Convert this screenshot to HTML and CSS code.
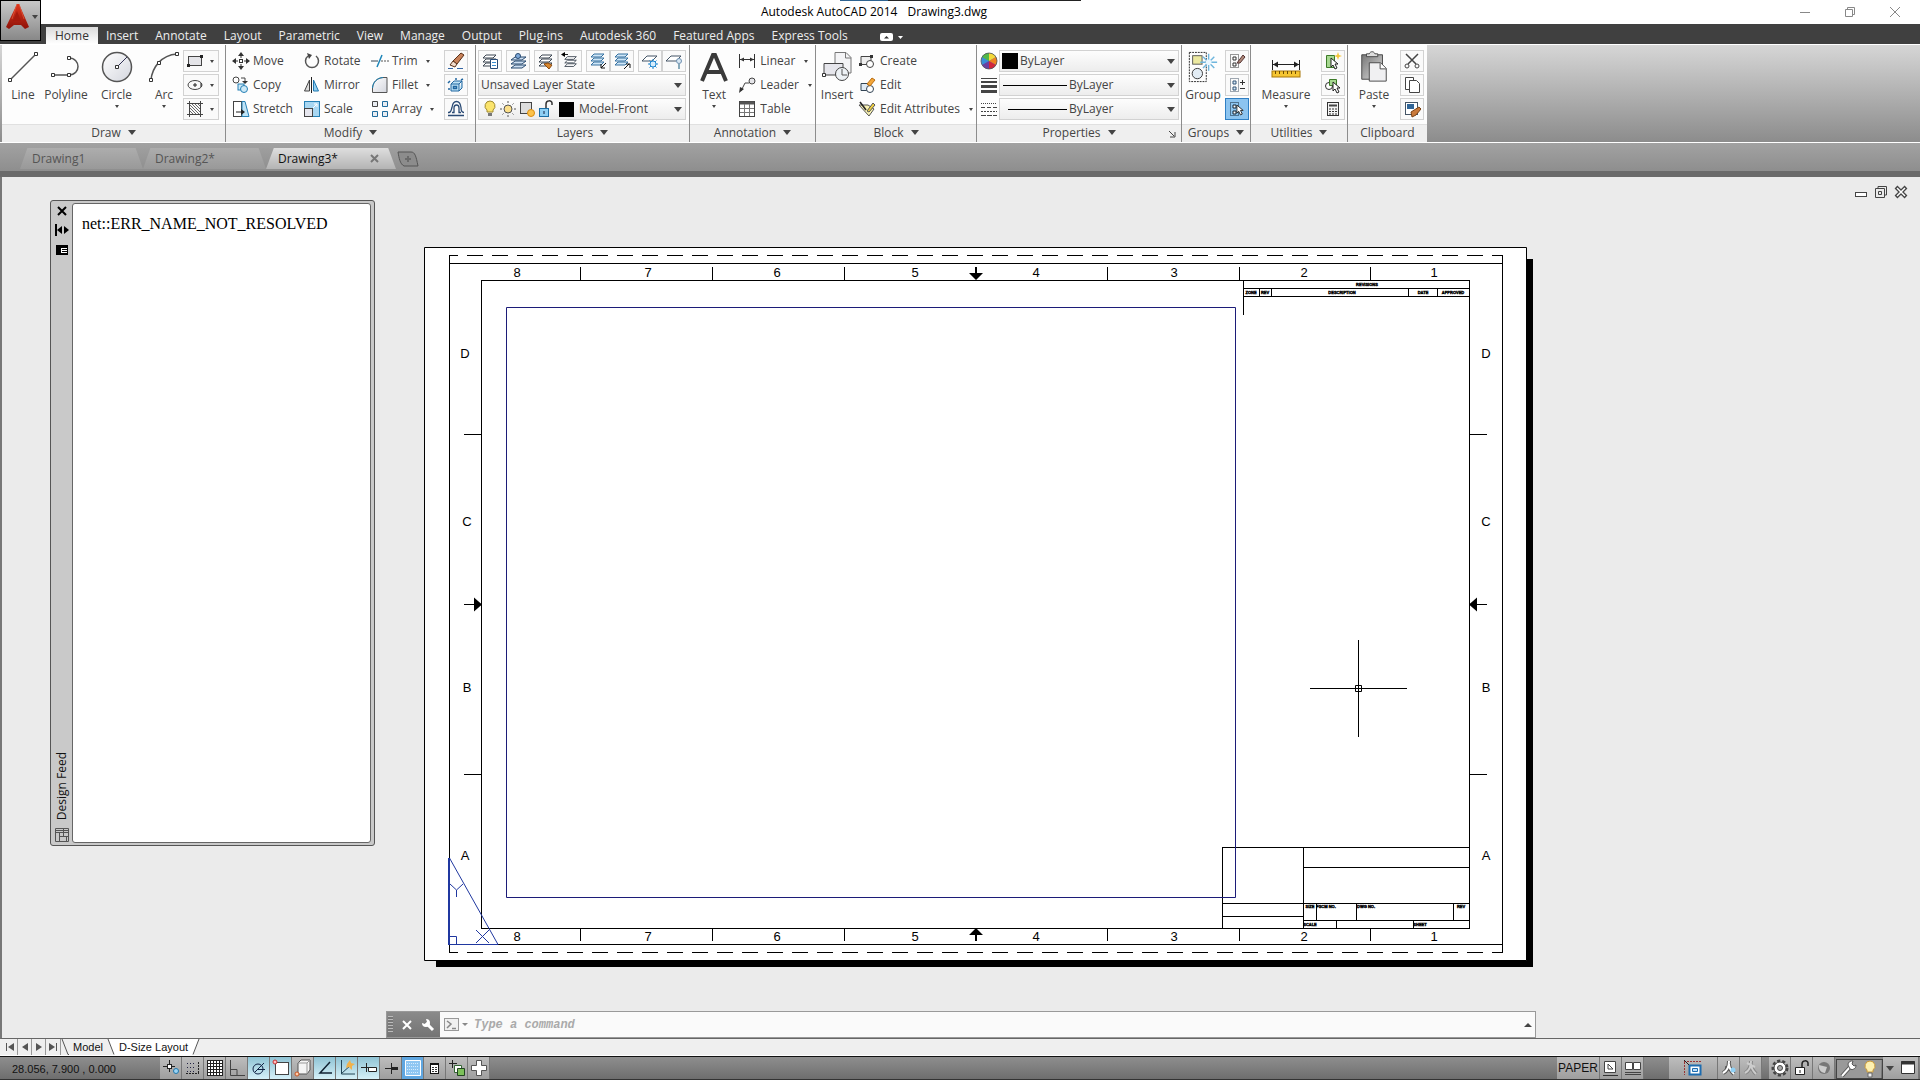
FILE: index.html
```html
<!DOCTYPE html>
<html lang="en">
<head>
  <meta charset="UTF-8" />
  <meta name="viewport" content="width=device-width, initial-scale=1.0" />
  <title>Autodesk AutoCAD 2014 - Drawing3.dwg</title>
  <link rel="stylesheet" href="styles.css">
</head>
<body>
  <!-- shared glyphs -->
  <svg width="0" height="0" class="defs" aria-hidden="true">
    <defs>
      <linearGradient id="g-red" x1="0" y1="0" x2="0" y2="1"><stop offset="0" stop-color="#e0361c"/><stop offset="1" stop-color="#8e1208"/></linearGradient>
      <linearGradient id="g-grey" x1="0" y1="0" x2="1" y2="1"><stop offset="0" stop-color="#fff"/><stop offset="1" stop-color="#d4d6de"/></linearGradient>
      <linearGradient id="g-paste" x1="0" y1="0" x2="1" y2="1"><stop offset="0" stop-color="#777"/><stop offset="1" stop-color="#ddd"/></linearGradient>
      <pattern id="p-hatch" width="3" height="3" patternUnits="userSpaceOnUse"><path d="M0 0L3 3" stroke="#444" stroke-width=".8"/></pattern>
      <symbol id="layers" viewBox="0 0 18 18">
        <path d="M5 3h10l-3 3H2zM5 7h10l-3 3H2zM5 11h10l-3 3H2z" fill="#fff" stroke="#3a4450"/>
      </symbol>
      <symbol id="cursor" viewBox="0 0 10 13"><path d="M1 1v9l2-2 2 4 2-1-2-4h3z" fill="#fff" stroke="#222"/></symbol>
    </defs>
  </svg>

  <header class="title-bar">
    <span class="top-line"></span>
    <h1><span>Autodesk AutoCAD 2014</span><span>Drawing3.dwg</span></h1>
    <div class="window-controls">
      <button aria-label="Minimize"><svg width="12" height="12"><path d="M1 6.500h10" stroke="#888"/></svg></button>
      <button aria-label="Restore"><svg width="12" height="12" fill="none" stroke="#888"><path d="M1.500 3.500h7v7h-7zM3.500 3.500v-2h7v7h-2"/></svg></button>
      <button aria-label="Close"><svg width="12" height="12"><path d="M1 1l10 10M11 1L1 11" stroke="#888"/></svg></button>
    </div>
  </header>

  <button class="app-button" aria-label="Application menu">
    <svg width="25" height="27" viewBox="0 0 25 27"><path d="M12 1L1 24l3 2 5-4h7l4 4 4-2L14 1z" fill="url(#g-red)"/><path d="M12 8l-4 10h8z" fill="#a61a0c"/><path d="M12 1L7 16M14 1l5 15" stroke="#d9553a" stroke-width=".8"/></svg>
    <i class="arrow"></i>
  </button>

  <nav class="menu-tabs">
    <button class="active">Home</button>
    <button>Insert</button>
    <button>Annotate</button>
    <button>Layout</button>
    <button>Parametric</button>
    <button>View</button>
    <button>Manage</button>
    <button>Output</button>
    <button>Plug-ins</button>
    <button>Autodesk 360</button>
    <button>Featured Apps</button>
    <button>Express Tools</button>
    <button class="min-ribbon" aria-label="Minimize ribbon"><svg width="26" height="10"><rect x="1" y="1" width="13" height="8" rx="2" fill="#fff"/><path d="M5 6.500h5L7.500 4z" fill="#333"/><path d="M19 4h5l-2.500 3z" fill="#fff"/></svg></button>
  </nav>

  <div class="ribbon">
    <section class="panel">
      <div class="panel-body draw">
        <button class="large"><svg width="32" height="32" viewBox="0 0 32 32"><path d="M3 29L29 3" stroke="#555" stroke-width="1.500"/><path d="M1.500 27.500h3v3h-3zM27.500 1.500h3v3h-3z" fill="#fff" stroke="#333"/></svg>Line</button>
        <button class="large"><svg width="32" height="32" viewBox="0 0 32 32" fill="none" stroke="#555" stroke-width="1.500"><path d="M3 24h16c12 0 12-17 0-17"/><path d="M1.500 22.500h3v3h-3zM17.500 22.500h3v3h-3zM17.500 5.500h3v3h-3z" fill="#fff" stroke="#333" stroke-width="1"/></svg>Polyline</button>
        <button class="large"><svg width="32" height="32" viewBox="0 0 32 32"><circle cx="16" cy="16" r="14.500" fill="url(#g-grey)" stroke="#555" stroke-width="1.500"/><path d="M16 16L26 6" stroke="#335"/><path d="M14.500 14.500h3v3h-3z" fill="#fff" stroke="#333"/></svg>Circle<i class="arrow"></i></button>
        <button class="large"><svg width="32" height="32" viewBox="0 0 32 32"><path d="M3 29C4 17 13 4 29 3" fill="none" stroke="#555" stroke-width="1.500"/><path d="M1.500 27.500h3v3h-3zM9.500 10.500h3v3h-3zM27.500 1.500h3v3h-3z" fill="#fff" stroke="#333"/></svg>Arc<i class="arrow"></i></button>
        <div class="stack">
          <button class="split" aria-label="Rectangle"><svg width="18" height="14"><rect x="2.500" y="2.500" width="13" height="9" fill="#e4e4e8" stroke="#444"/><path d="M1 10h3v3H1zM14 1h3v3h-3z" fill="#222"/></svg><i class="arrow"></i></button>
          <button class="split" aria-label="Ellipse"><svg width="18" height="14"><ellipse cx="9" cy="7" rx="7" ry="4.500" fill="none" stroke="#444"/><path d="M7 7h4M9 5v4M15 5v4" stroke="#222"/></svg><i class="arrow"></i></button>
          <button class="split" aria-label="Hatch"><svg width="18" height="16"><rect x="3" y="3" width="11" height="10" fill="url(#p-hatch)"/><path d="M3.500 0v16M14.500 0v16M1 2.500h16M1 13.500h16" stroke="#444"/></svg><i class="arrow"></i></button>
        </div>
      </div>
      <footer class="panel-title">Draw<i class="arrow big"></i></footer>
    </section>

    <section class="panel">
      <div class="panel-body modify">
        <button class="tool"><svg width="18" height="18" stroke="#333"><path d="M9 2v14M2 9h14" stroke-dasharray="4 6"/><path d="M9 0l3 4H6zM9 18l3-4H6zM0 9l4-3v6zM18 9l-4-3v6z" fill="#333" stroke="none"/><rect x="7.500" y="7.500" width="3" height="3" fill="#fff"/></svg>Move</button>
        <button class="tool"><svg width="18" height="18"><path d="M13 4A6.500 6.500 0 1 1 5 4" fill="none" stroke="#555" stroke-width="1.500"/><path d="M4 1l5 2-3 4z" fill="#444"/></svg>Rotate</button>
        <button class="tool"><svg width="18" height="18"><path d="M0 9h7" stroke="#345"/><path d="M6 15l5-12" stroke="#1b84b8" stroke-width="1.500"/><path d="M10 9h8" stroke="#555" stroke-dasharray="2 1"/></svg>Trim<i class="arrow"></i></button>
        <button class="mini" aria-label="Erase"><svg width="18" height="18"><path d="M14 1l3 2-7 9-4-3z" fill="#c8825a" stroke="#5a3018"/><path d="M6 9l4 3-2 3-5-2z" fill="#f2dccb" stroke="#5a3018"/><path d="M1 16.500h5M10 16.500h6" stroke="#3465a4"/></svg></button>

        <button class="tool"><svg width="18" height="18" fill="#fff"><circle cx="4" cy="4" r="3" stroke="#444"/><path d="M9 2h4v3" fill="none" stroke="#444"/><path d="M10 5h6l-3 3z" fill="#333"/><rect x="6" y="8" width="6" height="6" fill="#cde9f7" stroke="#2680b5"/><circle cx="12" cy="13" r="3.500" fill="#cde9f7" stroke="#2680b5"/></svg>Copy</button>
        <button class="tool"><svg width="18" height="18"><path d="M8.500 1v16" stroke="#222"/><path d="M6.500 4v11h-5z" fill="#ddd" stroke="#444"/><path d="M10.500 4v11h5z" fill="#8fcdf0" stroke="#1f78b0"/></svg>Mirror</button>
        <button class="tool"><svg width="18" height="18"><path d="M1.500 16.500V12C2 6 6 2 12 1.500h4v15z" fill="url(#g-grey)" stroke="#555"/><path d="M1.500 12C2 6 6 2 12 1.500" fill="none" stroke="#1b84b8"/></svg>Fillet<i class="arrow"></i></button>
        <button class="mini" aria-label="Explode"><svg width="18" height="18" fill="#bfe3f6" stroke="#2166a0"><path d="M4 8h8v7H4zM4 8l3-3h8l-3 3M12 15l3-3V5"/><path d="M6.500 10.500h3v2h-3zM1 7l2-2M16 3l-2 1M1 13h2M9 2v2" stroke-width="1.500"/></svg></button>

        <button class="tool"><svg width="18" height="18"><rect x="1.500" y="1.500" width="8" height="15" fill="#fff" stroke="#444"/><path d="M10 1.500h3l4 15h-7z" fill="#bfe3f6" stroke="#2680b5"/><path d="M4 12h7" stroke="#222"/><path d="M9 9l4 3-4 3z" fill="#222"/></svg>Stretch</button>
        <button class="tool"><svg width="18" height="18"><rect x="1.500" y="1.500" width="15" height="15" fill="#a9d7f2" stroke="#2680b5"/><rect x="1.500" y="8.500" width="8" height="8" fill="#e6e6ee" stroke="#444"/><path d="M10 8l4-4M11 4h3v3" stroke="#fff" fill="none"/></svg>Scale</button>
        <button class="tool"><svg width="18" height="18" fill="#e9edf2" stroke="#1f6a9c"><path d="M1.500 1.500h5v5h-5z" stroke="#444"/><path d="M11.500 1.500h5v5h-5zM1.500 11.500h5v5h-5zM11.500 11.500h5v5h-5z"/></svg>Array<i class="arrow"></i></button>
        <button class="mini" aria-label="Offset"><svg width="18" height="18" fill="none" stroke="#2a4a74" stroke-width="1.300"><path d="M1 15.500h16M1 12.500h1c2 0 2-2 3-5 1-8 8-8 9 0 0 3 1 5 3 5M5 12.500h2V8c0-4 5-4 5 0v4.500h2"/></svg></button>
      </div>
      <footer class="panel-title">Modify<i class="arrow big"></i></footer>
    </section>

    <section class="panel">
      <div class="panel-body layer-panel">
        <div class="layer-tools">
          <button class="mini" aria-label="Layer properties"><svg width="18" height="18"><use href="#layers" width="18" height="18"/><path d="M9.500 7.500h7v9h-7z" fill="#fff" stroke="#2a4a74"/><path d="M11 10.500h4M11 13.500h4" stroke="#3b8ed0"/></svg></button>
          <button class="mini" aria-label="Layer states"><svg width="18" height="18"><path d="M6 5h11l-4 3H2zM6 9h11l-4 3H2zM6 13h11l-4 3H2z" fill="#cfe0f2" stroke="#27496f"/><circle cx="9" cy="4" r="2.500" fill="#7ea9da" stroke="#27496f"/></svg></button>
          <div class="pair">
            <button class="mini" aria-label="Match layer"><svg width="18" height="18"><use href="#layers" width="18" height="18"/><path d="M7 12l4-1 4 2-3 4z" fill="#d8862c" stroke="#8a4a10"/></svg></button>
            <button class="mini" aria-label="Layer previous"><svg width="18" height="18"><use href="#layers" x="2" y="2" width="16" height="16"/><path d="M1 2.500h6" stroke="#222"/><path d="M0 2.500L4 0v5z"/></svg></button>
          </div>
          <div class="pair">
            <button class="mini" aria-label="Isolate"><svg width="18" height="18"><path d="M5 2h10l-3 3H2zM5 6h10l-3 3H2zM5 10h10l-3 3H2z" fill="#cfe6f7" stroke="#3470a0"/><path d="M17 11l-5 5M12 12v4h4" stroke="#111" fill="none"/></svg></button>
            <button class="mini" aria-label="Unisolate"><svg width="18" height="18"><path d="M5 2h10l-3 3H2zM5 6h10l-3 3H2zM5 10h10l-3 3H2z" fill="#cfe6f7" stroke="#3470a0"/><path d="M11 17l5-5M13 12h4v4" stroke="#111" fill="none"/></svg></button>
          </div>
          <div class="pair">
            <button class="mini" aria-label="Freeze"><svg width="18" height="18"><path d="M6 4h10l-5 5H1z" fill="#fff" stroke="#456"/><path d="M12 7v10M7 12h10M8.500 8.500l7 7M15.500 8.500l-7 7" stroke="#1f86cf"/><circle cx="12" cy="12" r="3" fill="#d6ecfb" stroke="#1f86cf"/></svg></button>
            <button class="mini" aria-label="Layer off"><svg width="18" height="18"><path d="M6 4h10l-5 5H1z" fill="#fff" stroke="#456"/><circle cx="14" cy="9" r="2.500" fill="#d8e8f4" stroke="#7090b0"/><path d="M13 12h2v5h-2z" fill="#8ab"/></svg></button>
          </div>
        </div>
        <div class="combo">
          <select aria-label="Layer state"><option>Unsaved Layer State</option></select><i class="arrow big"></i>
        </div>
        <div class="combo">
          <span class="layer-icons">
            <svg width="16" height="18"><path d="M8 1a5 5 0 0 1 3 9v2H5v-2a5 5 0 0 1 3-9z" fill="#fbe46c" stroke="#a08a30"/><path d="M6 13h4v3H6z" fill="#777"/></svg>
            <svg width="18" height="18"><circle cx="9" cy="9" r="4" fill="#fce08a" stroke="#555"/><path d="M9 1v2M9 15v2M1 9h2M15 9h2M3.500 3.500l1 1M13.500 13.500l1 1M14.500 3.500l-1 1M4.500 13.500l-1 1" stroke="#555"/></svg>
            <svg width="18" height="18"><rect x="2.500" y="2.500" width="11" height="11" fill="#ddd" stroke="#444"/><circle cx="13" cy="13" r="3.500" fill="#fcc24a" stroke="#d98c10"/></svg>
            <svg width="18" height="18"><path d="M9 8V4c0-4 6-4 6-1v2" fill="none" stroke="#333" stroke-width="1.500"/><rect x="2.500" y="8.500" width="9" height="8" fill="#8fd0f5" stroke="#1b6ea5"/><path d="M7 11v3" stroke="#124"/></svg>
            <b class="swatch"></b>
          </span>
          <select aria-label="Layer"><option>Model-Front</option></select><i class="arrow big"></i>
        </div>
      </div>
      <footer class="panel-title">Layers<i class="arrow big"></i></footer>
    </section>

    <section class="panel">
      <div class="panel-body annotation">
        <button class="large"><svg width="32" height="32" viewBox="0 0 32 32"><path d="M4 30L15 4h2l11 26M8 21h16" fill="none" stroke="#3a3a3a" stroke-width="4"/></svg>Text<i class="arrow"></i></button>
        <div class="stack">
          <button class="tool"><svg width="18" height="18"><path d="M1.500 2v14M16.500 2v14M2 7.500h14" stroke="#333"/><path d="M2 7.500l4-2v4zM16 7.500l-4-2v4z" fill="#333"/></svg>Linear<i class="arrow"></i></button>
          <button class="tool"><svg width="18" height="18"><path d="M3 15L7 7h4" fill="none" stroke="#444"/><path d="M1 17l1-6 4 2z" fill="#333"/><circle cx="14" cy="5" r="3" fill="#e6e6ea" stroke="#444"/></svg>Leader<i class="arrow"></i></button>
          <button class="tool"><svg width="18" height="18"><rect x="1.500" y="1.500" width="15" height="15" fill="#fff" stroke="#444"/><path d="M2 3h14" stroke="#555" stroke-width="3"/><path d="M2 8.500h14M2 12.500h14M6.500 4v12M11.500 4v12" stroke="#777"/></svg>Table</button>
        </div>
      </div>
      <footer class="panel-title">Annotation<i class="arrow big"></i></footer>
    </section>

    <section class="panel">
      <div class="panel-body block">
        <button class="large"><svg width="32" height="32" viewBox="0 0 32 32"><path d="M14 1.500h11l5 5V22H14z" fill="#f4f4f6" stroke="#777"/><path d="M24.500 2v5H30" fill="none" stroke="#777"/><path d="M3 12.500h19V24H3z" fill="#e6e6ec" stroke="#444"/><circle cx="21" cy="23" r="6.500" fill="#eef2f6" stroke="#444"/><path d="M21 18v6h5" stroke="#555" fill="none"/><path d="M1.500 22.500h3v3h-3z" fill="#fff" stroke="#333"/></svg>Insert</button>
        <div class="stack">
          <button class="tool"><svg width="18" height="18"><path d="M3 4.500h10v8H3z" fill="#eee" stroke="#444"/><circle cx="12" cy="12" r="3.500" fill="#fff" stroke="#444"/><path d="M1 11h3v3H1zM12 3h3v3h-3z" fill="#333"/></svg>Create</button>
          <button class="tool"><svg width="18" height="18"><path d="M3 7.500h8v7H3z" fill="#dfeaf5" stroke="#345"/><circle cx="12" cy="13" r="3.500" fill="#fff" stroke="#345"/><path d="M9 8l5-6 3 2-5 6z" fill="#f3a63a" stroke="#b86c10"/></svg>Edit</button>
          <button class="tool"><svg width="18" height="18"><path d="M1 5h9l6 4-5 7z" fill="#f8f2b4" stroke="#555"/><path d="M2 2l6 8" stroke="#222" stroke-width="1.500"/><path d="M9 11l6-8 2 2-6 7z" fill="#f0d040" stroke="#555"/></svg>Edit Attributes<i class="arrow"></i></button>
        </div>
      </div>
      <footer class="panel-title">Block<i class="arrow big"></i></footer>
    </section>

    <section class="panel">
      <div class="panel-body properties">
        <div class="prop-row">
          <svg width="18" height="18"><circle cx="9" cy="9" r="8" fill="#3a8fd8"/><path d="M9 9V1a8 8 0 0 1 7 4z" fill="#f4d93a"/><path d="M9 9l7-4a8 8 0 0 1 0 8z" fill="#f0821e"/><path d="M9 9l7 4a8 8 0 0 1-7 4z" fill="#d3263b"/><path d="M9 9V1a8 8 0 0 0-7 4z" fill="#52b848"/><path d="M9 9l-7 4a8 8 0 0 0 7 4z" fill="#6a3fa0"/><circle cx="9" cy="9" r="8" fill="none" stroke="#555" stroke-width=".8"/></svg>
          <div class="combo"><b class="swatch"></b><select aria-label="Object color"><option>ByLayer</option></select><i class="arrow big"></i></div>
        </div>
        <div class="prop-row">
          <svg width="18" height="18"><path d="M1 2.500h16" stroke="#444"/><path d="M1 6h16" stroke="#444" stroke-width="2"/><path d="M1 10.500h16" stroke="#444" stroke-width="3"/><path d="M1 15.500h16" stroke="#444" stroke-width="3"/></svg>
          <div class="combo"><b class="line long"></b><select aria-label="Lineweight"><option>ByLayer</option></select><i class="arrow big"></i></div>
        </div>
        <div class="prop-row">
          <svg width="18" height="18" stroke="#444"><path d="M1 3.500h16" stroke-dasharray="1 1"/><path d="M1 7.500h16" stroke-dasharray="4 2"/><path d="M1 11.500h16" stroke-dasharray="2 1"/><path d="M1 15.500h16" stroke-dasharray="5 1"/></svg>
          <div class="combo"><b class="line"></b><select aria-label="Linetype"><option>ByLayer</option></select><i class="arrow big"></i></div>
        </div>
      </div>
      <footer class="panel-title">Properties<i class="arrow big"></i>
        <svg class="launcher" width="8" height="8"><path d="M1 1l5 5M7 2v5H2" fill="none" stroke="#444"/></svg>
      </footer>
    </section>

    <section class="panel">
      <div class="panel-body groups">
        <button class="large"><svg width="32" height="34" viewBox="0 0 32 34"><path d="M1.500 1.500h18v31h-18z" fill="none" stroke="#222" stroke-dasharray="2 1"/><rect x="5" y="5" width="10" height="9" fill="#ece9a0" stroke="#555"/><circle cx="10" cy="24" r="5.500" fill="#e3edf5" stroke="#333"/><path d="M22 3v18M13 12h18M16 6l12 12M28 6L16 18" stroke="#6fb6dd" stroke-width="1.500"/><circle cx="22" cy="12" r="3" fill="#eaf7ff"/></svg>Group</button>
        <div class="stack">
          <button class="mini" aria-label="Ungroup"><svg width="18" height="18"><path d="M2.500 2.500h8v13h-8z" fill="none" stroke="#333" stroke-dasharray="1 1"/><path d="M5 5h3v3H5zM5 11h3v3H5z" fill="#fff" stroke="#333"/><path d="M9 11l6-8 2 2-5 6z" fill="#b08a7a" stroke="#533"/></svg></button>
          <button class="mini" aria-label="Group edit"><svg width="18" height="18"><path d="M2.500 2.500h8v13h-8z" fill="none" stroke="#456" stroke-dasharray="1 1"/><path d="M5 5h3v3H5zM5 11h3v3H5z" fill="#d7e9f7" stroke="#357"/><path d="M14.500 4v5M12 6.500h5M12 12.500h5" stroke="#333"/></svg></button>
          <button class="mini selected" aria-label="Group selection"><svg width="18" height="18"><path d="M2.500 2.500h8v13h-8z" fill="none" stroke="#123" stroke-dasharray="1 1"/><path d="M5 5h3v3H5zM5 11h3v3H5z" fill="#fff" stroke="#123"/><use href="#cursor" x="8" y="4" width="9" height="12"/></svg></button>
        </div>
      </div>
      <footer class="panel-title">Groups<i class="arrow big"></i></footer>
    </section>

    <section class="panel">
      <div class="panel-body utilities">
        <button class="large"><svg width="32" height="32" viewBox="0 0 32 32"><path d="M2.500 9v10M29.500 9v10M3 13.500h26" stroke="#222"/><path d="M3 13.500l5-3v6zM29 13.500l-5-3v6z" fill="#222"/><rect x="2" y="20" width="28" height="6" fill="#f6c632" stroke="#a87708"/><path d="M5.500 20v3M9.500 20v3M13.500 20v3M17.500 20v3M21.500 20v3M25.500 20v3" stroke="#6b4a00"/></svg>Measure<i class="arrow"></i></button>
        <div class="stack">
          <button class="mini" aria-label="Quick select"><svg width="18" height="18"><path d="M2.500 3.500h8v12h-8z" fill="#a6d890" stroke="#3c7a28"/><path d="M14 0l1 3 3 1-3 1-1 3-1-3-3-1 3-1z" fill="#f5c63a"/><use href="#cursor" x="6" y="5" width="10" height="13"/></svg></button>
          <button class="mini" aria-label="Select all"><svg width="18" height="18"><circle cx="5" cy="10" r="3.500" fill="#fff" stroke="#333"/><path d="M5.500 3.500h7v6h-7z" fill="#a6d890" stroke="#3c7a28"/><use href="#cursor" x="8" y="5" width="10" height="13"/></svg></button>
          <button class="mini" aria-label="Calculator"><svg width="18" height="18"><rect x="3.500" y="2.500" width="11" height="13" fill="#f4f4f4" stroke="#333"/><path d="M5 5.500h8" stroke="#444" stroke-width="2"/><path d="M5 9h8M5 11.500h8M5 14h8" stroke="#333" stroke-dasharray="2 1"/></svg></button>
        </div>
      </div>
      <footer class="panel-title">Utilities<i class="arrow big"></i></footer>
    </section>

    <section class="panel">
      <div class="panel-body clipboard">
        <button class="large"><svg width="32" height="34" viewBox="0 0 32 34"><path d="M3 4h22v26H3z" fill="url(#g-paste)" stroke="#444"/><path d="M8 6V3h3c1-3 5-3 6 0h3v3z" fill="#ddd" stroke="#444"/><path d="M11 12.500h12l6 6V32H11z" fill="#f0f0f2" stroke="#444"/><path d="M22.500 13v6H29" fill="#fff" stroke="#444"/></svg>Paste<i class="arrow"></i></button>
        <div class="stack">
          <button class="mini" aria-label="Cut"><svg width="18" height="18" fill="none" stroke="#444"><path d="M3 2l10 10M15 2L5 12" stroke-width="1.500"/><circle cx="4" cy="14" r="2"/><circle cx="14" cy="14" r="2"/></svg></button>
          <button class="mini" aria-label="Copy clip"><svg width="18" height="18" fill="#fff" stroke="#444"><path d="M2.500 1.500h8v12h-8z"/><path d="M6.500 4.500h7l3 3v9h-10z"/></svg></button>
          <button class="mini" aria-label="Match properties"><svg width="18" height="18"><rect x="2.500" y="2.500" width="12" height="12" fill="#fff" stroke="#456"/><path d="M4 4h7v5H4z" fill="#2f6496"/><path d="M8 12l8-5 2 2-5 6-4 2z" fill="#c9793a" stroke="#7a4214"/></svg></button>
        </div>
      </div>
      <footer class="panel-title">Clipboard</footer>
    </section>
  </div>

  <nav class="doc-tabs">
    <button class="doc-tab">Drawing1</button>
    <button class="doc-tab">Drawing2*</button>
    <button class="doc-tab active">Drawing3*<svg width="9" height="9"><path d="M1 1l7 7M8 1L1 8" stroke="#777" stroke-width="2"/></svg></button>
    <button class="new-tab" aria-label="New drawing"><svg width="24" height="18"><path d="M2 2h13c4 0 5 4 7 14H8C4 14 3 8 2 2z" fill="#8c8c8c" stroke="#555"/><path d="M12 6v6M9 9h6" stroke="#6a6a6a" stroke-width="2"/></svg></button>
  </nav>

  <main class="workspace">
    <div class="mdi-controls">
      <button aria-label="Minimize drawing"><svg width="14" height="14"><rect x="1.500" y="7.500" width="11" height="4" fill="#fff" stroke="#444"/></svg></button>
      <button aria-label="Restore drawing"><svg width="14" height="14" fill="none" stroke="#444"><path d="M1.500 3.500h9v9h-9zM4 3V1.500h8.500V10H11M4.500 6.500h3v3h-3z"/></svg></button>
      <button aria-label="Close drawing"><svg width="14" height="14"><path d="M2 2l10 10M12 2L2 12" stroke="#444" stroke-width="4"/><path d="M3 3l8 8M11 3l-8 8" stroke="#fff" stroke-width="1.500"/></svg></button>
    </div>

    <!-- paper sheet, user units are sheet pixels -->
    <svg class="sheet" width="1110" height="721" viewBox="424 247 1110 721">
      <path d="M436 259h1097v708H436z" fill="#000"/>
      <path d="M424.500 247.500h1102v713h-1102z" fill="#fff" stroke="#000"/>
      <g fill="none" stroke="#000" shape-rendering="crispEdges">
        <path d="M449.500 255v698M1502.500 255v698M449 263.500h1054M449 944.500h1054"/>
        <path d="M449 255.500h1054M449 952.500h1054" stroke-dasharray="16 9" stroke-dashoffset="7"/>
        <path d="M481.500 280.500h988v648h-988z"/>
        <!-- zone ticks -->
        <path d="M580.500 267v13M712.500 267v13M844.500 267v13M1107.500 267v13M1239.500 267v13M1370.500 267v13"/>
        <path d="M580.500 928v13M712.500 928v13M844.500 928v13M1107.500 928v13M1239.500 928v13M1370.500 928v13"/>
        <path d="M464 434.500h17M464 774.500h17M1470 434.500h17M1470 774.500h17M464 604.500h16M1471 604.500h16"/>
        <path d="M976 267v12M976 929v12" stroke-width="2"/>
        <!-- revision table -->
        <path d="M1243.500 280v35M1243 288.500h226M1243 296.500h226M1259.500 288v8M1271.500 288v8M1408.500 288v8M1437.500 288v8"/>
        <!-- title block -->
        <path d="M1222.500 928v-81h247M1303.500 847v81M1303 867.500h166M1222 903.500h247M1222 916.500h81M1303 920.500h166M1316.500 903v17M1356.500 903v17M1453.500 903v17M1336.500 920v8M1413.500 920v8"/>
      </g>
      <path d="M976 280l-7-7h14zM976 928l-7 7h14zM482 604.500l-8-7v14zM1469 604.500l8-7v14z"/>
      <path d="M506.500 307.500h729v590h-729z" fill="none" stroke="#1c1c78"/>
      <g class="zone-text">
        <text x="517" y="277">8</text><text x="648" y="277">7</text><text x="777" y="277">6</text><text x="915" y="277">5</text>
        <text x="1036" y="277">4</text><text x="1174" y="277">3</text><text x="1304" y="277">2</text><text x="1434" y="277">1</text>
        <text x="517" y="941">8</text><text x="648" y="941">7</text><text x="777" y="941">6</text><text x="915" y="941">5</text>
        <text x="1036" y="941">4</text><text x="1174" y="941">3</text><text x="1304" y="941">2</text><text x="1434" y="941">1</text>
        <text x="465" y="358">D</text><text x="467" y="526">C</text><text x="467" y="692">B</text><text x="465" y="860">A</text>
        <text x="1486" y="358">D</text><text x="1486" y="526">C</text><text x="1486" y="692">B</text><text x="1486" y="860">A</text>
      </g>
      <g class="block-text">
        <text x="1367" y="286">REVISIONS</text><text x="1251" y="294">ZONE</text><text x="1265" y="294">REV</text><text x="1342" y="294">DESCRIPTION</text><text x="1423" y="294">DATE</text><text x="1453" y="294">APPROVED</text>
        <text x="1310" y="908">SIZE</text><text x="1326" y="908">FSCM NO.</text><text x="1366" y="908">DWG NO.</text><text x="1461" y="908">REV</text><text x="1310" y="926">SCALE</text><text x="1420" y="926">SHEET</text>
      </g>
      <g fill="none" stroke="#2038a0">
        <path d="M449 858v87" stroke-width="2"/>
        <path d="M449.500 858L498 944.500H449M449 936.500h7.500v8"/>
        <path d="M450 884l6.500 6 6.500-6M456.500 890v7M476 930l13 13M489 930l-13 13"/>
      </g>
      <path d="M1310 688.500h97M1358.500 640v97M1355.500 685.500h6v6h-6z" fill="none" stroke="#000"/>
    </svg>

    <aside class="palette">
      <div class="palette-bar">
        <svg width="12" height="10"><path d="M2 1l8 8M10 1L2 9" stroke="#000" stroke-width="2"/></svg>
        <svg width="14" height="12"><path d="M1 0v12" stroke="#000" stroke-width="2"/><path d="M2 6l5-4v8zM14 6L9 2v8z"/></svg>
        <svg width="12" height="12"><path d="M0 1h12v10H0z"/><path d="M6 4.500h5M6 6.500h5M6 8.500h5M5.500 4v5" stroke="#fff"/></svg>
        <h2>Design Feed</h2>
        <svg width="14" height="14" fill="none" stroke="#555"><path d="M.5.5h13v13H.5zM0 4.500h14M4.500 4v10M8.500 0v9M4 8.500h10M0 2.500h14M11.500 8v6"/></svg>
      </div>
      <div class="palette-content">net::ERR_NAME_NOT_RESOLVED</div>
    </aside>

    <form class="command-line">
      <div class="command-handle">
        <i class="grip"></i>
        <button type="button" aria-label="Close command line"><svg width="12" height="12"><path d="M2 2l8 8M10 2l-8 8" stroke="#fff" stroke-width="2"/></svg></button>
        <button type="button" aria-label="Customize"><svg width="14" height="14"><path d="M5 5l7 7" stroke="#fff" stroke-width="3"/><path d="M5 1a4 4 0 1 1-4 4l3 1 2-2z" fill="#fff"/></svg></button>
      </div>
      <svg width="26" height="16"><rect x=".5" y="1.500" width="14" height="12" fill="#f0f0f0" stroke="#999"/><path d="M3 4l4 3-4 4M8 11.500h4" fill="none" stroke="#888" stroke-width="1.500"/><path d="M18 6h6l-3 3z" fill="#888"/></svg>
      <input type="text" placeholder="Type a command" aria-label="Command">
      <i class="arrow up"></i>
    </form>
  </main>

  <nav class="layout-tabs">
    <div class="nav-arrows">
      <button aria-label="First"><svg width="10" height="10"><path d="M1.500 1v8" stroke="#555"/><path d="M9 1v8L3 5z" fill="#555"/></svg></button>
      <button aria-label="Previous"><svg width="8" height="10"><path d="M7 1v8L1 5z" fill="#555"/></svg></button>
      <button aria-label="Next"><svg width="8" height="10"><path d="M1 1v8l6-4z" fill="#555"/></svg></button>
      <button aria-label="Last"><svg width="10" height="10"><path d="M8.500 1v8" stroke="#555"/><path d="M1 1v8l6-4z" fill="#555"/></svg></button>
    </div>
    <svg width="8" height="16"><path d="M1 0l6 15.500h1" fill="none" stroke="#555"/></svg>
    <button class="layout-tab">Model</button>
    <svg width="8" height="16"><path d="M1 0h7v16H7z" fill="#fff"/><path d="M1 0l6 15.500" stroke="#555"/></svg>
    <button class="layout-tab active">D-Size Layout</button>
    <svg width="8" height="16"><path d="M0 0h7L1 16H0z" fill="#fff"/><path d="M7 0L1 15.500" stroke="#555"/></svg>
  </nav>

  <footer class="status-bar">
    <output class="coords">28.056, 7.900 , 0.000</output>
    <div class="toggles">
      <button aria-label="Infer constraints"><svg width="18" height="18"><path d="M1 7.500h12M7.500 1v12" stroke="#222"/><rect x="5.500" y="5.500" width="4" height="4" fill="#fff" stroke="#222"/><circle cx="14" cy="12" r="2.500" fill="#9cd4f4" stroke="#27a"/></svg></button>
      <button aria-label="Snap"><svg width="18" height="18"><path d="M3 4.500h9M3 8.500h9M3 12.500h9" stroke="#224" stroke-dasharray="1 2"/><path d="M14.500 3v11M2 14.500h13" stroke="#222" stroke-dasharray="2 1"/></svg></button>
      <button aria-label="Grid"><svg width="18" height="18"><path d="M1 1h16v16H1z" fill="#fff"/><path d="M1.500 1v16M4.500 1v16M7.500 1v16M10.500 1v16M13.500 1v16M16.500 1v16M1 1.500h16M1 4.500h16M1 7.500h16M1 10.500h16M1 13.500h16M1 16.500h16" stroke="#222"/></svg></button>
      <button aria-label="Ortho"><svg width="18" height="18" fill="none" stroke="#444"><path d="M2.500 1v15.500H17M3 10.500h6v6"/></svg></button>
      <button class="on" aria-label="Polar"><svg width="18" height="18" fill="none" stroke="#124"><circle cx="8" cy="10" r="5"/><path d="M5 13l9-9M8 10.500h7"/></svg></button>
      <button class="on" aria-label="Object snap"><svg width="18" height="18"><rect x="3.500" y="3.500" width="13" height="12" fill="#fff" stroke="#444"/><circle cx="3" cy="3" r="2" fill="#fbb" stroke="#c33"/></svg></button>
      <button aria-label="3D object snap"><svg width="18" height="18"><path d="M4 4l3-3h9v10l-3 4H4z" fill="#f4f4f4" stroke="#555"/><path d="M4 4h9v11M13 4l3-3" fill="none" stroke="#999"/><circle cx="3" cy="15" r="2" fill="#fca" stroke="#c52"/></svg></button>
      <button class="on" aria-label="Object snap tracking"><svg width="18" height="18"><path d="M14 3L4 14h12" fill="none" stroke="#123" stroke-width="1.500"/></svg></button>
      <button class="on" aria-label="Dynamic UCS"><svg width="18" height="18"><path d="M3.500 1v14H17M3 15L14 5" fill="none" stroke="#245"/><path d="M12 1l1 3 4 1-3 2v4l-3-3-3 1 1-4z" fill="#f2b24a"/></svg></button>
      <button class="on" aria-label="Dynamic input"><svg width="18" height="18"><path d="M1 8.500h8M6.500 4v9" stroke="#222"/><path d="M8.500 8.500h8v4h-8z" fill="#fff" stroke="#222"/></svg></button>
      <button aria-label="Lineweight"><svg width="18" height="18"><path d="M3 9.500h6M9.500 4v11" stroke="#222"/><path d="M9 9.500h7" stroke="#222" stroke-width="3"/></svg></button>
      <button class="on blue" aria-label="Transparency"><svg width="18" height="18"><path d="M1.500 1.500h15v15h-15z" fill="#8ec6f2" stroke="#fff"/><path d="M3 4.500h12M3 7.500h12M3 10.500h12M3 13.500h12" stroke="#d6ecfd" stroke-dasharray="1 1"/></svg></button>
      <button aria-label="Quick properties"><svg width="18" height="18"><rect x="4.500" y="4.500" width="8" height="10" fill="#fff" stroke="#111"/><path d="M4 5h9" stroke="#111" stroke-width="2"/><path d="M6 8.500h5M6 10.500h5M6 12.500h5" stroke="#333" stroke-dasharray="2 1"/></svg></button>
      <button aria-label="Selection cycling"><svg width="18" height="18"><path d="M1 4.500h8M4.500 1v8" stroke="#222"/><path d="M6.500 6.500h7v7h-7z" fill="#fff" stroke="#363"/><path d="M9.500 9.500h7v7h-7z" fill="#7cc05a" stroke="#242"/></svg></button>
      <button aria-label="Annotation monitor"><svg width="18" height="18"><path d="M6.500 1.500h5v5h5v5h-5v5h-5v-5h-5v-5h5z" fill="#fff" stroke="#555"/></svg></button>
    </div>
    <div class="status-right">
      <button class="paper">PAPER</button>
      <button aria-label="Quick view layouts"><svg width="16" height="18"><path d="M1.500 2.500h11v11h-11z" fill="#fff" stroke="#444"/><path d="M5 5v5h5z" fill="none" stroke="#444"/><path d="M0 16.500h15" stroke="#333"/></svg></button>
      <button aria-label="Quick view drawings"><svg width="18" height="18"><path d="M1.500 3.500h7v7h-7zM9.500 3.500h7v7h-7z" fill="#fff" stroke="#444"/><path d="M1 13.500h16M1 15.500h16" stroke="#444"/></svg></button>
      <span class="gap"></span>
      <button class="wide" aria-label="Maximize viewport"><svg width="20" height="18"><path d="M1 2.500h18M1.500 3v13" stroke="#933" stroke-dasharray="2 1"/><path d="M6.500 6.500h11v9h-11z" fill="#fff" stroke="#1d6cb0" stroke-width="2"/><path d="M9.500 9.500h5v3h-5z" fill="#bfe0fa" stroke="#1d6cb0"/><path d="M1 1l5 5" stroke="#222"/></svg></button>
      <button aria-label="Annotation visibility"><svg width="18" height="18" fill="none"><path d="M9 2c0 5-2 10-6 12M9 5c0 4 2 7 5 10M5 9l6 1" stroke="#555" stroke-width="4"/><path d="M9 2c0 5-2 10-6 12M9 5c0 4 2 7 5 10" stroke="#fff" stroke-width="2"/><circle cx="13" cy="11" r="2.500" fill="#8fd0f5"/></svg></button>
      <button aria-label="Annotation scale"><svg width="18" height="18" fill="none"><path d="M9 2c0 5-2 10-6 12M9 5c0 4 2 7 5 10" stroke="#888" stroke-width="4"/><path d="M9 2c0 5-2 10-6 12M9 5c0 4 2 7 5 10M5 4l8 4" stroke="#ccc" stroke-width="2"/></svg></button>
      <span class="gap small"></span>
      <button aria-label="Workspace switching"><svg width="18" height="18"><circle cx="9" cy="9" r="7" fill="none" stroke="#444" stroke-width="3" stroke-dasharray="3 2"/><circle cx="9" cy="9" r="6" fill="#fff" stroke="#444"/><circle cx="9" cy="9" r="2.500" fill="#aaa" stroke="#444"/></svg></button>
      <button aria-label="Lock UI"><svg width="18" height="18"><path d="M9 9V5c0-4 6-4 6-1v3" fill="none" stroke="#222" stroke-width="1.500"/><path d="M2.500 8.500h9v7h-9z" fill="#fff" stroke="#222"/><path d="M7 11v3" stroke="#222"/></svg></button>
      <button aria-label="Hardware acceleration"><svg width="18" height="18"><circle cx="9" cy="9" r="6" fill="#777"/><path d="M4 6l8 2-2 6c-4 0-7-4-6-8z" fill="#ccc"/></svg></button>
      <div class="pressed">
        <button aria-label="Tools"><svg width="18" height="18"><path d="M3 16l8-9" stroke="#555" stroke-width="4"/><path d="M3 16l8-9" stroke="#fff" stroke-width="2"/><path d="M9 5a4 4 0 0 1 5-4l-1 3 2 2 2-1a4 4 0 0 1-6 4z" fill="#fff" stroke="#555"/></svg></button>
        <button aria-label="Isolate objects"><svg width="14" height="18"><path d="M7 1a5 5 0 0 1 3 9v2H4v-2a5 5 0 0 1 3-9z" fill="#fdf0b0" stroke="#c8983a"/><path d="M5 13h4v4H5z" fill="#eee" stroke="#666"/></svg></button>
      </div>
      <button class="caret" aria-label="Status bar menu"><i class="arrow big"></i></button>
      <button aria-label="Clean screen"><svg width="16" height="16"><path d="M1.500 1.500h13v12h-13z" fill="#fff" stroke="#333"/><path d="M1 3h14" stroke="#333" stroke-width="3"/></svg></button>
    </div>
  </footer>
</body>
</html>
```
FILE: styles.css
```css
:root {
  --dark: #404040;
  --text: #444;
  --line: #8c8c8c;
  --soft-line: #d2d2d2;
  --canvas: #ebebeb;
  --ui-font: "Open Sans", "Noto Sans", sans-serif;
}
* { box-sizing: border-box; }
html, body { height: 100%; }
body {
  margin: 0;
  display: flex;
  flex-direction: column;
  min-height: 100vh;
  background: #f0f0f0;
  color: var(--text);
  font: 12px/16px var(--ui-font);
  position: relative;
  overflow: hidden;
}
button {
  font: inherit;
  color: inherit;
  background: none;
  border: 0;
  padding: 0;
  margin: 0;
  white-space: nowrap;
}
svg { display: block; flex: none; }
.defs { position: absolute; }

.arrow {
  width: 0;
  height: 0;
  flex: none;
  border: 2px solid transparent;
  border-top: 3px solid #444;
  border-bottom: 0;
}
.arrow.big { border-width: 5px 4px 0; }
.arrow.up { border-width: 0 4px 4px; border-bottom: 4px solid #444; }

/* title */
.title-bar {
  height: 24px;
  flex: none;
  background: #fff;
  display: flex;
  position: relative;
}
.top-line {
  position: absolute;
  left: 840px;
  top: 0;
  width: 241px;
  height: 1px;
  background: linear-gradient(to right, #2d6290 20%, #222 20%);
}
.title-bar h1 {
  flex: 1;
  margin: 0;
  display: flex;
  justify-content: center;
  align-items: center;
  gap: 10px;
  font-size: 12px;
  font-weight: normal;
  color: #000;
  padding-right: 34px;
}
.window-controls { display: flex; padding-right: 3px; }
.window-controls button {
  width: 45px;
  display: flex;
  justify-content: center;
  align-items: center;
}
.app-button {
  position: absolute;
  z-index: 2;
  left: 0;
  top: 0;
  width: 41px;
  height: 41px;
  border: 1px solid #000;
  background: linear-gradient(#c8c8c8, #888);
  display: flex;
  align-items: center;
  gap: 2px;
  padding: 0 0 8px 4px;
}
.app-button .arrow { border-width: 4px 3px 0; }

/* ribbon tabs */
.menu-tabs {
  height: 20px;
  flex: none;
  display: flex;
  align-items: flex-end;
  background: var(--dark);
  padding-left: 46px;
  color: #eee;
}
.menu-tabs button { height: 17px; padding: 0 9px 0 8px; line-height: 15px; }
.menu-tabs .active { background: linear-gradient(#dadada, #fff); color: #333; padding: 0 9px; }
.menu-tabs .min-ribbon { margin-left: 14px; height: 14px; }

/* ribbon */
.ribbon {
  height: 99px;
  flex: none;
  display: flex;
  background: linear-gradient(#d6d6d6, #8c8c8c);
  border-top: 1px solid #fff;
  border-bottom: 1px solid #fff;
  padding-left: 2px;
}
.panel {
  display: flex;
  flex-direction: column;
  background: #fdfdfd;
  border-right: 1px solid var(--line);
}
.panel:last-child { border-right: 0; }
.panel-body { flex: 1; display: flex; padding: 4px 3px 0; }
.panel-title {
  height: 18px;
  display: flex;
  justify-content: center;
  align-items: center;
  gap: 7px;
  background: #efefef;
  border-top: 1px solid #e0e0e0;
  padding-bottom: 2px;
  position: relative;
}
.launcher { position: absolute; right: 5px; top: 5px; }
.large {
  display: flex;
  flex-direction: column;
  align-items: center;
  width: 44px;
}
.large svg { margin: 2px 0 4px; height: 32px; }
.large .arrow { margin-top: 2px; }
.stack { display: flex; flex-direction: column; }
.tool {
  height: 24px;
  display: flex;
  align-items: center;
  gap: 4px;
  text-align: left;
}
.tool .arrow { margin-left: 5px; }
.mini, .split, .combo {
  height: 22px;
  margin: 1px 0;
  border: 1px solid var(--soft-line);
  background: #fafafa;
  display: flex;
  align-items: center;
  justify-content: center;
}
.mini { width: 24px; }
.mini.selected { background: #8cc4f0; border-color: #2f7fc4; }
.split { width: 36px; justify-content: space-between; padding: 0 4px 0 2px; }

.draw { width: 223px; padding: 4px 6px 0 0; }
.draw .large:nth-child(1) { width: 42px; }
.draw .large:nth-child(3) { width: 57px; }
.draw .large:nth-child(4) { width: 38px; }
.modify {
  display: grid;
  grid-template-columns: 71px 68px 73px 24px;
  grid-auto-rows: 24px;
  width: 249px;
  padding-left: 6px;
}
.modify .tool { gap: 3px; }
.layer-panel { width: 213px; flex-direction: column; padding: 4px 3px 0 2px; }
.layer-tools { display: flex; justify-content: space-between; }
.pair { display: flex; }
.combo { background: linear-gradient(#fdfdfd, #ededed); justify-content: flex-start; padding-right: 3px; }
.combo select {
  appearance: none;
  flex: 1;
  min-width: 0;
  height: 20px;
  border: 0;
  background: none;
  font: inherit;
  color: inherit;
  padding: 0 2px;
}
.layer-icons { display: flex; align-items: center; gap: 1px; padding-left: 3px; }
.swatch { width: 15px; height: 15px; background: #000; margin: 0 3px; }
.line { width: 59px; height: 1px; background: #000; margin-left: 8px; }
.line.long { width: 64px; margin-left: 3px; }
.annotation { width: 125px; padding-left: 0; }
.annotation .large { width: 49px; }
.block { width: 160px; padding-left: 1px; }
.block .stack { padding-left: 1px; }
.properties { width: 204px; flex-direction: column; padding-right: 2px; }
.prop-row { display: flex; align-items: center; gap: 1px; }
.prop-row .combo { flex: 1; }
.prop-row .swatch { width: 16px; height: 16px; margin: 0 0 0 2px; }
.groups { width: 68px; padding: 4px 1px 0 0; justify-content: space-between; }
.groups .large { width: 42px; }
.utilities { width: 96px; padding: 4px 1px 0 0; }
.utilities .large { width: 70px; }
.clipboard { width: 79px; padding-left: 0; }
.clipboard .large { width: 53px; }

/* drawing tabs */
.doc-tabs {
  height: 34px;
  flex: none;
  display: flex;
  align-items: flex-start;
  padding: 5px 0 0 20px;
  background: linear-gradient(#a2a2a2, #8e8e8e);
  border-bottom: 6px solid #6a6a6a;
}
.doc-tab {
  width: 123px;
  height: 21px;
  padding-left: 12px;
  display: flex;
  align-items: center;
  text-align: left;
  color: #555;
  background: linear-gradient(#adadad, #999);
  clip-path: polygon(6% 0, 94% 0, 100% 100%, 0 100%);
}
.doc-tab.active {
  width: 130px;
  color: #111;
  background: linear-gradient(#dedede, #b4b4b4);
  justify-content: space-between;
  padding-right: 17px;
}
.new-tab { padding: 2px 0 0; }

/* canvas */
.workspace {
  flex: 1;
  min-height: 0;
  position: relative;
  background: var(--canvas);
  border-left: 2px solid #777;
  border-bottom: 1px solid #666;
}
.mdi-controls {
  position: absolute;
  right: 12px;
  top: 8px;
  display: flex;
  gap: 6px;
}
.sheet { position: absolute; left: 422px; top: 70px; }
.zone-text {
  font: 13px "Liberation Sans", sans-serif;
  text-anchor: middle;
}
.block-text {
  font: bold 4px "Liberation Sans", sans-serif;
  text-anchor: middle;
  stroke: #000;
  stroke-width: .4px;
}

.palette {
  position: absolute;
  left: 48px;
  top: 23px;
  width: 325px;
  height: 646px;
  display: flex;
  padding: 2px 3px 2px 0;
  background: #c9c9c9;
  border: 1px solid #555;
  border-radius: 3px;
}
.palette-bar {
  width: 21px;
  display: flex;
  flex-direction: column;
  align-items: center;
  gap: 8px;
  padding: 3px 0 1px;
}
.palette-bar h2 {
  margin: auto 0 0;
  writing-mode: vertical-rl;
  transform: rotate(180deg);
  font-size: 12px;
  font-weight: normal;
  line-height: 16px;
  color: #111;
}
.palette-content {
  flex: 1;
  background: #fff;
  border: 1px solid #666;
  border-radius: 3px;
  padding: 11px 9px;
  font: 16px/18px "Liberation Serif", serif;
  color: #000;
}
.command-line {
  position: absolute;
  left: 0;
  right: 0;
  bottom: 0;
  width: 1150px;
  height: 27px;
  margin: 0 auto;
  display: flex;
  align-items: center;
  gap: 4px;
  background: #fafafa;
  border: 1px solid #999;
  padding-right: 3px;
}
.command-handle {
  align-self: stretch;
  width: 53px;
  display: flex;
  align-items: center;
  gap: 8px;
  padding-left: 1px;
  background: linear-gradient(#8a8a8a, #747474);
}
.grip { width: 5px; height: 18px; background: repeating-linear-gradient(#bbb 0 1px, #777 1px 3px); }
.command-line input {
  flex: 1;
  min-width: 0;
  border: 0;
  outline: 0;
  background: none;
  padding: 0;
  font: italic bold 12px "Liberation Mono", monospace;
}
.command-line input::placeholder { color: #aaa; opacity: 1; }

/* layout tabs */
.layout-tabs {
  height: 17px;
  flex: none;
  display: flex;
  background: #efefef;
  border-bottom: 1px solid #fff;
  font: 11px/16px "Liberation Sans", sans-serif;
  color: #111;
}
.nav-arrows { display: flex; padding-left: 3px; }
.nav-arrows button {
  width: 14px;
  display: flex;
  align-items: center;
  justify-content: center;
  border-right: 1px solid #999;
}
.nav-arrows button:first-child, .nav-arrows button:last-child { width: 15px; }
.layout-tab { padding: 0 4px; }
.layout-tab.active { background: #fff; }

/* status bar */
.status-bar {
  height: 24px;
  flex: none;
  display: flex;
  background: linear-gradient(#8e8e8e, #6e6e6e);
  border-top: 1px solid #111;
  border-bottom: 1px solid #333;
  color: #111;
  font: 12px/22px "Liberation Sans", sans-serif;
}
.coords { width: 160px; padding-left: 12px; font-size: 11px; line-height: 24px; }
.toggles, .status-right, .pressed { display: flex; }
.toggles button, .status-right button {
  width: 22px;
  display: flex;
  align-items: center;
  justify-content: center;
  background: linear-gradient(#bdbdbd, #9e9e9e);
  border-right: 1px solid #777;
}
.toggles .on { background: linear-gradient(#8fc3d4, #d5f0f8); }
.toggles .blue { background: #5fa6e0; }
.status-right { margin-left: auto; padding-right: 1px; }
.status-right .paper { width: 43px; }
.status-right .wide { width: 49px; }
.status-right .caret { width: 14px; border: 0; }
.gap { width: 25px; }
.gap.small { width: 7px; }
.pressed { width: 47px; margin: 2px 0 0 1px; border: 1px solid #444; }
.status-right .pressed button { border: 0; background: #999; }
```
